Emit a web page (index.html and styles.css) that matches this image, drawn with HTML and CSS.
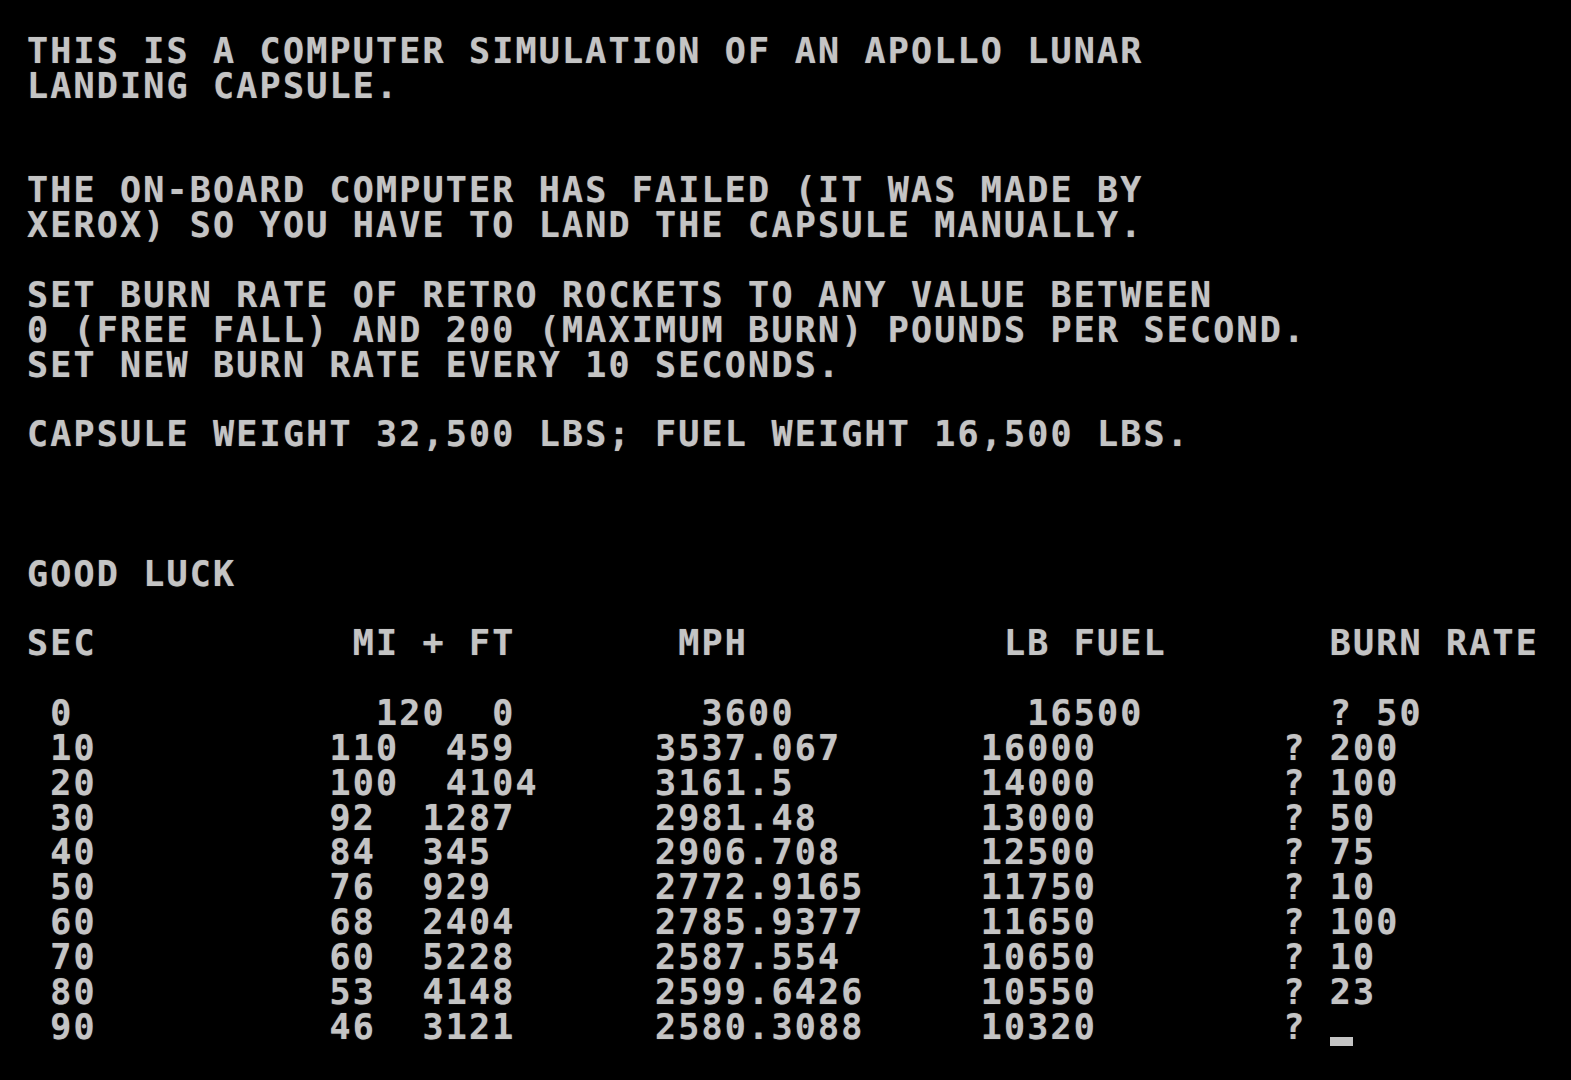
FILE: index.html
```html
<!DOCTYPE html>
<html lang="en">
<head>
<meta charset="utf-8">
<title>Lunar Lander</title>
<link rel="stylesheet" href="styles.css">
</head>
<body>
<pre class="screen">THIS IS A COMPUTER SIMULATION OF AN APOLLO LUNAR
LANDING CAPSULE.


THE ON-BOARD COMPUTER HAS FAILED (IT WAS MADE BY
XEROX) SO YOU HAVE TO LAND THE CAPSULE MANUALLY.

SET BURN RATE OF RETRO ROCKETS TO ANY VALUE BETWEEN
0 (FREE FALL) AND 200 (MAXIMUM BURN) POUNDS PER SECOND.
SET NEW BURN RATE EVERY 10 SECONDS.

CAPSULE WEIGHT 32,500 LBS; FUEL WEIGHT 16,500 LBS.



GOOD LUCK

SEC           MI + FT       MPH           LB FUEL       BURN RATE

 0             120  0        3600          16500        ? 50
 10          110  459      3537.067      16000        ? 200
 20          100  4104     3161.5        14000        ? 100
 30          92  1287      2981.48       13000        ? 50
 40          84  345       2906.708      12500        ? 75
 50          76  929       2772.9165     11750        ? 10
 60          68  2404      2785.9377     11650        ? 100
 70          60  5228      2587.554      10650        ? 10
 80          53  4148      2599.6426     10550        ? 23
 90          46  3121      2580.3088     10320        ? <span class="cursor"></span></pre>
</body>
</html>
```
FILE: styles.css
```css
html {
  background: #000;
}

body {
  margin: 0;
  background: #000;
}

.screen {
  margin: 0;
  padding: 34px 0 0 27px;
  font-family: "DejaVu Sans Mono", "Liberation Mono", monospace;
  font-weight: bold;
  font-size: 35px;
  line-height: 34.85px;
  letter-spacing: 2.19px;
  color: #c4c4c4;
  text-shadow: 0 0 1px rgba(196, 196, 196, 0.6);
}

.cursor {
  display: inline-block;
  width: 23px;
  height: 9px;
  vertical-align: -7px;
  background: #c4c4c4;
}
```
